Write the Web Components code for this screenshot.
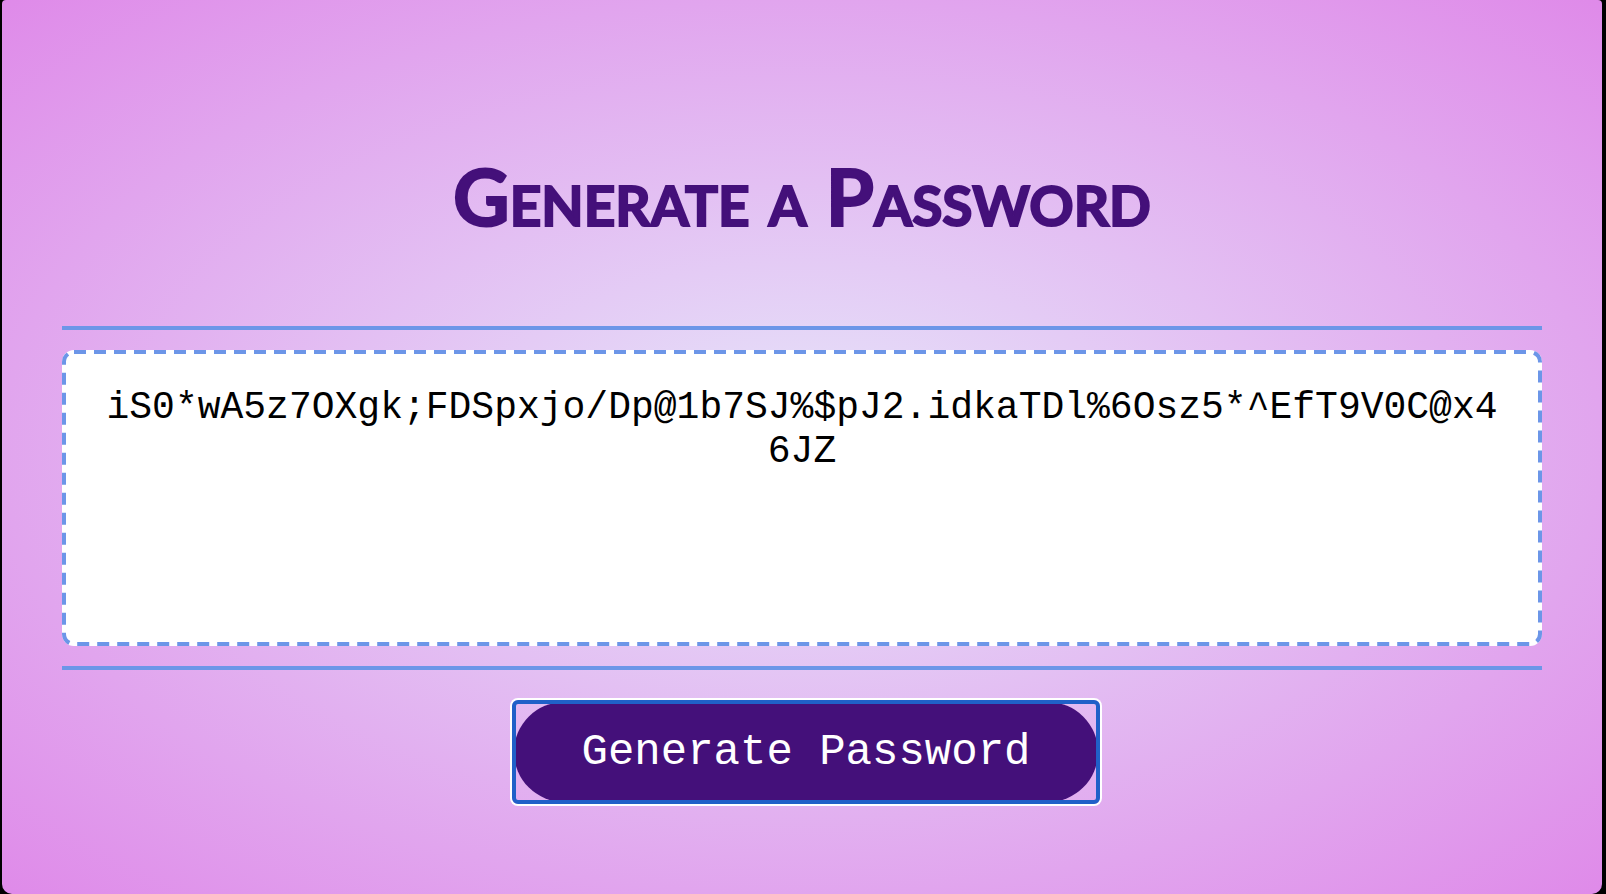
<!DOCTYPE html>
<html lang="en">
<head>
<meta charset="utf-8">
<title>Generate a Password</title>
<style>
  html { height: 100%; background: #000; }
  body { margin: 0; min-height: 100%; display: flex; }
</style>
</head>
<body>
<password-app></password-app>

<template id="app-template">
  <style>
    :host { flex: 1; min-width: 0; display: flex; background: #000; padding: 0 4px 0 2px; }
    main {
      flex: 1; min-width: 0; box-sizing: border-box; padding: 0 60px 60px;
      border-radius: 4px 4px 10px 10px;
      background: radial-gradient(#e6e6fa, #df8ae9);
      display: flex; flex-direction: column; align-items: stretch;
    }
    h1 {
      margin: 0; padding: 148px 0 82px; text-align: center; color: #44107a;
      font: 700 78px/96px Lato, sans-serif; font-variant-caps: small-caps;
      -webkit-text-stroke: 2px #44107a; stroke-linejoin: round;
    }
    .frame { border: solid #6c96e8; border-width: 4px 0; padding: 20px 0; }
    .actions { display: flex; justify-content: center; padding: 32px 0 0 8px; }
  </style>
  <main>
    <h1>Generate a Password</h1>
    <div class="frame"><password-output></password-output></div>
    <div class="actions"><focus-button>Generate Password</focus-button></div>
  </main>
</template>

<template id="output-template">
  <style>
    :host { display: block; position: relative; }
    textarea {
      display: block; width: 100%; height: 296px; box-sizing: border-box; margin: 0;
      padding: 36px; border: 0; border-radius: 12px;
      background: #fff; color: #000; resize: none; outline: 0; overflow: hidden;
      text-align: center; word-break: break-all;
      font: 400 38px/44px "Liberation Mono", "Courier New", monospace;
    }
    svg { position: absolute; inset: 0; width: 100%; height: 100%; pointer-events: none; }
    rect {
      x: 2px; y: 2px; width: calc(100% - 4px); height: calc(100% - 4px); rx: 10px;
      fill: none; stroke: #6c96e8; stroke-width: 4px; stroke-dasharray: 12 8;
    }
  </style>
  <textarea readonly aria-label="Your secure password">iS0*wA5z7OXgk;FDSpxjo/Dp@1b7SJ%$pJ2.idkaTDl%6Osz5*^EfT9V0C@x46JZ</textarea>
  <svg aria-hidden="true"><rect/></svg>
</template>

<template id="button-template">
  <style>
    :host { display: block; position: relative; }
    button {
      display: block; height: 100px; padding: 0 68px; border: 0; border-radius: 50px;
      background: #44107a; color: #fff; outline: 0; cursor: pointer;
      font: 400 44px/52px "Liberation Mono", "Courier New", monospace;
    }
    .ring {
      position: absolute; inset: -2px; border: 4px solid #2060c8; border-radius: 6px;
      box-shadow: 0 0 0 2px #fff; pointer-events: none;
    }
  </style>
  <button type="button"><slot></slot></button>
  <div class="ring"></div>
</template>

<script>
  const define = (name, templateId) => customElements.define(name, class extends HTMLElement {
    constructor() {
      super();
      const root = this.attachShadow({ mode: "open" });
      root.append(document.getElementById(templateId).content.cloneNode(true));
    }
  });
  define("password-output", "output-template");
  define("focus-button", "button-template");
  define("password-app", "app-template");
</script>
</body>
</html>
